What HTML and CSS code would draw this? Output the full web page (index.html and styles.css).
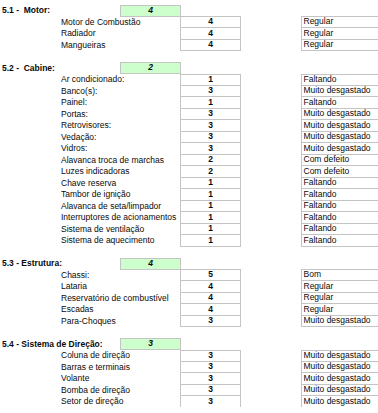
FILE: index.html
```html
<!DOCTYPE html>
<html lang="pt">
<head>
<meta charset="utf-8">
<title>Avaliação</title>
<link rel="stylesheet" href="styles.css">
</head>
<body>
<main class="sheet">
  <section class="sec">
    <div class="head"><span class="title">5.1 -  Motor:</span><span class="score">4</span></div>
    <div class="row"><span class="label">Motor de Combustão</span><span class="num">4</span><span class="status">Regular</span></div>
    <div class="row"><span class="label">Radiador</span><span class="num">4</span><span class="status">Regular</span></div>
    <div class="row"><span class="label">Mangueiras</span><span class="num">4</span><span class="status">Regular</span></div>
  </section>
  <section class="sec">
    <div class="head"><span class="title">5.2 -  Cabine:</span><span class="score">2</span></div>
    <div class="row"><span class="label">Ar condicionado:</span><span class="num">1</span><span class="status">Faltando</span></div>
    <div class="row"><span class="label">Banco(s):</span><span class="num">3</span><span class="status">Muito desgastado</span></div>
    <div class="row"><span class="label">Painel:</span><span class="num">1</span><span class="status">Faltando</span></div>
    <div class="row"><span class="label">Portas:</span><span class="num">3</span><span class="status">Muito desgastado</span></div>
    <div class="row"><span class="label">Retrovisores:</span><span class="num">3</span><span class="status">Muito desgastado</span></div>
    <div class="row"><span class="label">Vedação:</span><span class="num">3</span><span class="status">Muito desgastado</span></div>
    <div class="row"><span class="label">Vidros:</span><span class="num">3</span><span class="status">Muito desgastado</span></div>
    <div class="row"><span class="label">Alavanca troca de marchas</span><span class="num">2</span><span class="status">Com defeito</span></div>
    <div class="row"><span class="label">Luzes indicadoras</span><span class="num">2</span><span class="status">Com defeito</span></div>
    <div class="row"><span class="label">Chave reserva</span><span class="num">1</span><span class="status">Faltando</span></div>
    <div class="row"><span class="label">Tambor de ignição</span><span class="num">1</span><span class="status">Faltando</span></div>
    <div class="row"><span class="label">Alavanca de seta/limpador</span><span class="num">1</span><span class="status">Faltando</span></div>
    <div class="row"><span class="label">Interruptores de acionamentos</span><span class="num">1</span><span class="status">Faltando</span></div>
    <div class="row"><span class="label">Sistema de ventilação</span><span class="num">1</span><span class="status">Faltando</span></div>
    <div class="row"><span class="label">Sistema de aquecimento</span><span class="num">1</span><span class="status">Faltando</span></div>
  </section>
  <section class="sec">
    <div class="head"><span class="title">5.3 - Estrutura:</span><span class="score">4</span></div>
    <div class="row"><span class="label">Chassi:</span><span class="num">5</span><span class="status">Bom</span></div>
    <div class="row"><span class="label">Lataria</span><span class="num">4</span><span class="status">Regular</span></div>
    <div class="row"><span class="label">Reservatório de combustível</span><span class="num">4</span><span class="status">Regular</span></div>
    <div class="row"><span class="label">Escadas</span><span class="num">4</span><span class="status">Regular</span></div>
    <div class="row"><span class="label">Para-Choques</span><span class="num">3</span><span class="status">Muito desgastado</span></div>
  </section>
  <section class="sec">
    <div class="head"><span class="title">5.4 - Sistema de Direção:</span><span class="score">3</span></div>
    <div class="row"><span class="label">Coluna de direção</span><span class="num">3</span><span class="status">Muito desgastado</span></div>
    <div class="row"><span class="label">Barras e terminais</span><span class="num">3</span><span class="status">Muito desgastado</span></div>
    <div class="row"><span class="label">Volante</span><span class="num">3</span><span class="status">Muito desgastado</span></div>
    <div class="row"><span class="label">Bomba de direção</span><span class="num">3</span><span class="status">Muito desgastado</span></div>
    <div class="row"><span class="label">Setor de direção</span><span class="num">3</span><span class="status">Muito desgastado</span></div>
  </section>
</main>
</body>
</html>
```
FILE: styles.css
```css
html, body {
  margin: 0;
  padding: 0;
  background: #ffffff;
}

body {
  font-family: "Liberation Sans", Arial, sans-serif;
  font-size: 8.5px;
  color: #0a0a0a;
}

.sheet {
  display: flex;
  flex-direction: column;
  gap: 11.5px;
  padding-top: 4.5px;
}

.sec {
  display: flex;
  flex-direction: column;
}

.head,
.row {
  display: grid;
  grid-template-columns: 61px 59px 60px 61px 60px 1fr;
  height: 11.5px;
  line-height: 11.5px;
}

.title {
  grid-column: 1 / 3;
  font-weight: bold;
  white-space: pre;
  padding-left: 2px;
  padding-top: 0.5px;
}

.score {
  grid-column: 3;
  margin-right: -1px;
  background: #ccffcc;
  border: 1px solid #c4c4c4;
  box-sizing: border-box;
  text-align: center;
  font-weight: bold;
  font-style: italic;
  line-height: 9.5px;
}

.label {
  grid-column: 2 / 4;
  white-space: nowrap;
  padding-top: 0.5px;
}

.num,
.status {
  border: 1px solid #c4c4c4;
  border-top: none;
  box-sizing: border-box;
  line-height: 10.5px;
  white-space: nowrap;
  overflow: hidden;
}

.head + .row .num,
.head + .row .status {
  border-top: 1px solid #c4c4c4;
  line-height: 9.5px;
}

.num {
  grid-column: 4;
  text-align: center;
  font-weight: bold;
}

.status {
  grid-column: 6;
  padding-left: 1.5px;
  border-right: none;
}
```
